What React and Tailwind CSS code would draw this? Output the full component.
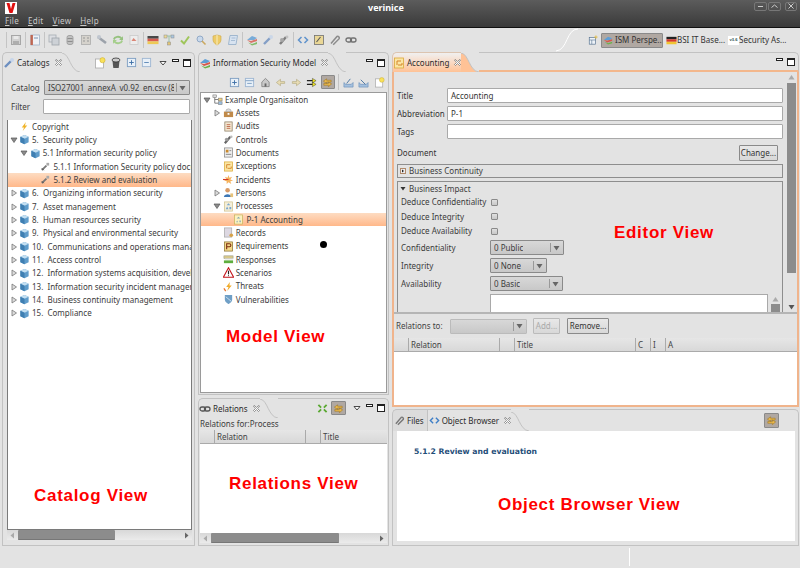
import React from "react";

const Svg = ({ s = 12, children, className = "" }) => (
  <svg width={s} height={s} viewBox="0 0 12 12" className={"shrink-0 " + className}>{children}</svg>
);

const Ic = ({ k, s = 12 }) => {
  switch (k) {
    case "cube":
      return <Svg s={s}><path d="M6 1l4.5 2v6L6 11.2 1.5 9V3z" fill="#5f9ccb" /><path d="M6 1l4.5 2L6 5.2 1.5 3z" fill="#c3dff2" /><path d="M6 5.2v6L1.5 9V3z" fill="#3f7fb2" /></Svg>;
    case "bolt":
      return <Svg s={s}><path d="M7.5 1L3 7h2.5L4 11l5-6H6.5z" fill="#f0b429" /></Svg>;
    case "wrench":
      return <Svg s={s}><path d="M2 10l5-5" stroke="#777" strokeWidth="2" /><path d="M7 2h3v3H7z" fill="#aaa" /><path d="M2 8l2 2" stroke="#444" /></Svg>;
    case "wrenchb":
      return <Svg s={s}><path d="M2 10l6-6" stroke="#6d8fc0" strokeWidth="2.4" /><circle cx="9" cy="3" r="2" fill="#c6d5ea" /></Svg>;
    case "org":
      return <Svg s={s}><path d="M3 3v7M3 6h4M3 10h4" stroke="#777" fill="none" /><rect x="1" y="1" width="4" height="3" fill="#ddd" stroke="#777" strokeWidth=".6" /><rect x="7" y="4.5" width="4" height="3" fill="#f4d27a" stroke="#777" strokeWidth=".6" /><rect x="7" y="8.5" width="4" height="3" fill="#9cc0e0" stroke="#777" strokeWidth=".6" /></Svg>;
    case "assets":
      return <Svg s={s}><rect x="1" y="5" width="10" height="6" fill="#c08a4a" /><path d="M3 5a3 3 0 016 0z" fill="#ddd" stroke="#999" strokeWidth=".6" /><rect x="5" y="6.5" width="2" height="2" fill="#fff" /></Svg>;
    case "audit":
      return <Svg s={s}><rect x="2" y="1" width="8" height="10" fill="#f3e6d0" stroke="#8a7a60" strokeWidth=".8" /><path d="M4 4h4M4 6h4M4 8h4" stroke="#b04a2a" strokeWidth=".8" /></Svg>;
    case "controls":
      return <Svg s={s}><path d="M2 10l6-7" stroke="#666" strokeWidth="2.4" /><circle cx="4" cy="6" r="2" fill="#999" /><circle cx="9" cy="3" r="1.4" fill="#bbb" /></Svg>;
    case "docs":
      return <Svg s={s}><rect x="1.5" y="1" width="9" height="10" fill="#eee" stroke="#888" strokeWidth=".8" /><rect x="3" y="3" width="3" height="3" fill="#c98a2e" /><path d="M7 4h2M3 8h6" stroke="#666" strokeWidth=".8" /></Svg>;
    case "exc":
      return <Svg s={s}><rect x="1.5" y="1" width="9" height="10" fill="#fbe6a4" stroke="#d9a93a" strokeWidth=".8" /><path d="M4 8V4h4M5 8h4V6" stroke="#d5842a" fill="none" /></Svg>;
    case "incident":
      return <Svg s={s}><path d="M6 1l1 3 3-1-2 3 3 1-3 1 1 3-3-2-2 2 0-3-3-1 3-1-2-3 3 1z" fill="#f5b35e" /><path d="M0 6h6" stroke="#d53a22" strokeWidth="1.2" /></Svg>;
    case "person":
      return <Svg s={s}><circle cx="5" cy="3.5" r="2.5" fill="#d89a66" /><path d="M1 11c0-4 8-4 8 0z" fill="#3f78b5" /><rect x="8" y="7" width="3" height="4" fill="#e7c27a" /></Svg>;
    case "process":
      return <Svg s={s}><rect x="1.5" y="1" width="9" height="10" fill="#f5efd9" stroke="#cfc28e" strokeWidth=".8" /><path d="M6 2.5l2 2H4zM3 9l1.5-3L6 9zM7 9V6.5h2V9z" fill="#79a6cf" /></Svg>;
    case "record":
      return <Svg s={s}><rect x="1.5" y="1" width="8" height="10" fill="#ddd8e2" stroke="#aaa" strokeWidth=".8" /><circle cx="9" cy="9" r="2" fill="#d8a34a" /></Svg>;
    case "req":
      return <Svg s={s}><rect x="1.5" y="1" width="9" height="10" fill="#f3d98a" stroke="#8a7233" strokeWidth=".8" /><path d="M4 9V3h3a1.5 1.5 0 010 3.2H4" stroke="#7c2a10" fill="none" strokeWidth="1.2" /></Svg>;
    case "resp":
      return <Svg s={s}><rect x="1" y="2" width="10" height="3" fill="#d8c98a" stroke="#998" strokeWidth=".6" /><rect x="2" y="5" width="9" height="2" fill="#eee" /><rect x="1" y="7" width="10" height="3" fill="#5eae3e" /></Svg>;
    case "warn":
      return <Svg s={s}><path d="M6 .8l5.6 10.4H.4z" fill="#fff" stroke="#c4161c" strokeWidth="1.2" /><path d="M6 4v4" stroke="#222" strokeWidth="1.2" /><path d="M6 9v1" stroke="#222" /></Svg>;
    case "threat":
      return <Svg s={s}><path d="M7.5 1L3.5 6.5h2.5L4.5 11l5-6H7z" fill="#f1ac2c" /><path d="M1 8l2 3" stroke="#e8752a" strokeWidth="1.4" /></Svg>;
    case "vuln":
      return <Svg s={s}><path d="M2 1h8v5c0 3-4 5-4 5S2 9 2 6z" fill="#6f9fc6" /><path d="M3 3l6 5" stroke="#cfe0ee" /></Svg>;
    case "newdoc":
      return <Svg s={s}><rect x="1.5" y="2" width="8" height="9" fill="#fff" stroke="#aaa" strokeWidth=".8" /><circle cx="8.5" cy="3.2" r="2.6" fill="#f8e15a" stroke="#c9a92a" strokeWidth=".5" /></Svg>;
    case "can":
      return <Svg s={s}><path d="M2.5 4h7l-.8 7H3.3z" fill="#555" /><ellipse cx="6" cy="3" rx="4" ry="2" fill="#ccc" stroke="#333" strokeWidth=".8" /></Svg>;
    case "plus":
      return <Svg s={s}><rect x="1.5" y="1.5" width="9" height="9" fill="#e8f0f8" stroke="#7e9fc2" /><path d="M3.5 6h5M6 3.5v5" stroke="#3d6ea5" /></Svg>;
    case "minus":
      return <Svg s={s}><rect x="1.5" y="1.5" width="9" height="9" fill="#e8f0f8" stroke="#9fb7d2" /><path d="M3.5 6h5" stroke="#5a86b5" /></Svg>;
    case "minusb":
      return <Svg s={s}><rect x="1.5" y="1.5" width="9" height="9" fill="#e8f0f8" stroke="#9fb7d2" /><path d="M1.5 4h9M3.5 7h5" stroke="#7e9fc2" /></Svg>;
    case "home":
      return <Svg s={s}><path d="M6 1.5L2 5.5v5h8v-5z" fill="#c9c9c9" stroke="#777" strokeWidth=".8" /><rect x="5" y="7" width="2" height="3.5" fill="#666" /></Svg>;
    case "left":
      return <Svg s={s}><path d="M1.5 6L6 2.5V5h4.5v2H6v2.5z" fill="#e8dcb4" stroke="#b3a980" strokeWidth=".7" /></Svg>;
    case "right":
      return <Svg s={s}><path d="M10.5 6L6 2.5V5H1.5v2H6v2.5z" fill="#e8dcb4" stroke="#b3a980" strokeWidth=".7" /></Svg>;
    case "arrows":
      return <Svg s={s}><path d="M1 4h7M1 8h7" stroke="#222" strokeWidth="1.2" /><path d="M7 1.5L11 4 7 6.5zM7 5.5L11 8 7 10.5z" fill="#eee31e" stroke="#333" strokeWidth=".5" /></Svg>;
    case "sync":
      return <Svg s={s}><path d="M1.5 4.5L5 2v1.5h5v2H5V7zM10.5 7.5L7 5.5V7H2v2h5v1.5z" fill="#e9b84a" stroke="#9c7420" strokeWidth=".6" /></Svg>;
    case "exp":
      return <Svg s={s}><path d="M1 6v5h10V6l-2 2H3z" fill="#a4c0de" stroke="#6a8fb8" strokeWidth=".7" /><path d="M4 7l4-5" stroke="#46729f" /></Svg>;
    case "imp":
      return <Svg s={s}><path d="M1 6v5h10V6l-2 2H3z" fill="#a4c0de" stroke="#6a8fb8" strokeWidth=".7" /><path d="M8 8L3 3" stroke="#46729f" /></Svg>;
    case "model":
      return <Svg s={s}><path d="M1 6l5-4 5 2-3 2z" fill="#5e9ed6" /><path d="M1 6l4 1 6-2v2L5 9z" fill="#d8584a" /><path d="M2 8.5l4 1.5 5-2v2l-5 1.5z" fill="#6cb24a" /></Svg>;
    case "save":
      return <Svg s={s}><rect x="1.5" y="1.5" width="9" height="9" fill="#c6c6c6" stroke="#808080" /><rect x="3.5" y="2" width="5" height="3" fill="#eee" /><rect x="3" y="7" width="6" height="3.5" fill="#8c8c8c" /></Svg>;
    case "reddoc":
      return <Svg s={s}><rect x="2" y="1" width="8.5" height="10" fill="#f2f5fa" stroke="#8fa6c1" strokeWidth=".8" /><rect x="1.5" y="1" width="2.4" height="10" fill="#b5482e" /><path d="M5 4h4" stroke="#5e7ea6" /></Svg>;
    case "copy":
      return <Svg s={s}><rect x="1" y="1" width="7" height="7" fill="#d8dce2" stroke="#808a96" strokeWidth=".8" /><rect x="4" y="4" width="7" height="7" fill="#c0c6cf" stroke="#707a86" strokeWidth=".8" /></Svg>;
    case "db":
      return <Svg s={s}><rect x="3" y="1.5" width="6" height="9" rx="2" fill="#aaa" stroke="#666" strokeWidth=".8" /><path d="M3.5 4.5h5M3.5 7.5h5" stroke="#555" /></Svg>;
    case "bld":
      return <Svg s={s}><rect x="1.5" y="1.5" width="9" height="9" fill="#ccc8be" stroke="#888" strokeWidth=".8" /><path d="M3 4h2M7 4h2M3 7h2M7 7h2" stroke="#666" /></Svg>;
    case "link":
      return <Svg s={s}><path d="M2 3l8 6" stroke="#6d7785" strokeWidth="2.6" /><circle cx="3" cy="3" r="2" fill="#a9b4c2" /></Svg>;
    case "refresh":
      return <Svg s={s}><path d="M1 5a5 4 0 019-1.5L11 2v4H7l1.5-1.2A3.5 3 0 002.5 6z" fill="#63ad3e" /><path d="M11 7a5 4 0 01-9 1.5L1 10V6h4L3.5 7.2A3.5 3 0 009.5 6z" fill="#7cc152" /></Svg>;
    case "pdf":
      return <Svg s={s}><rect x="2" y="1.5" width="8" height="9" fill="#f4f4f4" stroke="#bbb" strokeWidth=".8" /><path d="M3.5 7l2-3 3 3z" fill="#d6492e" /></Svg>;
    case "de":
      return <Svg s={s}><rect x="0.5" y="2" width="11" height="2.7" fill="#222" /><rect x="0.5" y="4.7" width="11" height="2.7" fill="#d8392b" /><rect x="0.5" y="7.4" width="11" height="2.7" fill="#f1c532" /></Svg>;
    case "tree":
      return <Svg s={s}><path d="M2 2h8M6 2v8" stroke="#8b9" fill="none" /><rect x="1" y="1" width="3" height="3" fill="#f0d880" stroke="#777" strokeWidth=".5" /><rect x="8" y="1" width="3" height="3" fill="#9cc0e0" stroke="#777" strokeWidth=".5" /><rect x="4.5" y="8" width="3" height="3" fill="#e3bf5a" stroke="#777" strokeWidth=".5" /></Svg>;
    case "check":
      return <Svg s={s}><path d="M2 6.5l3 3 5-7" stroke="#8fbf3a" strokeWidth="2" fill="none" /></Svg>;
    case "search":
      return <Svg s={s}><circle cx="5" cy="5" r="3" fill="#c3d7ef" stroke="#7f9cc0" /><path d="M7 7l3.5 3.5" stroke="#c69a3e" strokeWidth="1.6" /></Svg>;
    case "shield":
      return <Svg s={s}><path d="M2 2l4-1 4 1v4c0 3-4 5-4 5S2 9 2 6z" fill="#f0c64a" stroke="#c99a22" strokeWidth=".6" /><path d="M6 1v10" stroke="#fff1b8" /></Svg>;
    case "scroll":
      return <Svg s={s}><path d="M3 1.5h7.5L9 10.5H1.5z" fill="#d6e4f4" stroke="#7e9fc2" strokeWidth=".8" /><path d="M4.5 4h4M4 6.5h4" stroke="#7e9fc2" strokeWidth=".7" /></Svg>;
    case "code":
      return <Svg s={s}><path d="M4.5 3L1.5 6l3 3M7.5 3l3 3-3 3" stroke="#3f7fc7" strokeWidth="1.5" fill="none" /></Svg>;
    case "note":
      return <Svg s={s}><rect x="1.5" y="1.5" width="9" height="9" fill="#ecd583" stroke="#555" strokeWidth=".8" /><path d="M3.5 8l4-5" stroke="#333" strokeWidth="1.1" /></Svg>;
    case "clip":
      return <Svg s={s}><path d="M2 9.5l6-7a1.7 1.7 0 012.2 2.2l-6 6" stroke="#777" strokeWidth="1.5" fill="none" /></Svg>;
    case "chain":
      return <Svg s={s}><rect x="1" y="4" width="5.5" height="4" rx="2" fill="none" stroke="#555" strokeWidth="1.3" /><rect x="5.5" y="4" width="5.5" height="4" rx="2" fill="none" stroke="#555" strokeWidth="1.3" /></Svg>;
    case "newp":
      return <Svg s={s}><rect x="1.5" y="3" width="7.5" height="8" fill="#eef3f8" stroke="#55718f" strokeWidth=".8" /><path d="M1.5 6h7.5M4.5 6v5" stroke="#55718f" strokeWidth=".7" /><path d="M9.5 0.5v4M7.5 2.5h4" stroke="#e2b93b" /></Svg>;
    case "collapse":
      return <Svg s={s}><path d="M1.5 2l3 3M10.5 2l-3 3M1.5 10l3-3M10.5 10l-3-3" stroke="#5aa832" strokeWidth="2" /></Svg>;
    case "acc":
      return <Svg s={s}><rect x="1.5" y="1" width="9" height="10" fill="#fbf1c0" stroke="#c9b25a" strokeWidth=".8" /><path d="M6 3l2 2H4zM3.5 9l1-2 1 2zM7 9V7h1.5v2z" fill="#8aa9b0" /></Svg>;
    default:
      return <Svg s={s} />;
  }
};

const Caret = ({ open }) => (
  <svg width="8" height="8" viewBox="0 0 8 8" className="shrink-0">
    {open ? <path d="M1 2h6L4 6.5z" fill="#8c8c8c" stroke="#555" strokeWidth=".7" /> : <path d="M2 1l4.5 3L2 7z" fill="#ddd" stroke="#777" strokeWidth=".8" />}
  </svg>
);

const Close = () => (
  <svg width="7" height="7" viewBox="0 0 7 7" className="shrink-0 ml-[5px]">
    <path d="M.5 1l1-.5L3.500 2.500 5.500.5l1 .5L4.500 3.500l2 2-1 1-2-2-2 2-1-1 2-2z" fill="#fff" stroke="#555" strokeWidth=".6" />
  </svg>
);

const ViewBtns = ({ menu }) => (
  <div className="flex items-center gap-[3px] shrink-0">
    {menu && (
      <svg width="8" height="8" viewBox="0 0 8 8" className="mr-[2px]"><path d="M1 2.500h6L4 6z" fill="#fff" stroke="#222" strokeWidth=".8" /></svg>
    )}
    <div className="w-[8px] h-[8px] flex items-start"><div className="w-[7px] h-[3px] bg-white border border-[#222]" /></div>
    <div className="w-[8px] h-[8px] bg-white border border-[#222] border-t-2" />
  </div>
);

const Curve = ({ fill = "#e3e3e3" }) => (
  <svg width="18" height="19" viewBox="0 0 18 19" className="shrink-0 self-end" preserveAspectRatio="none">
    <path d="M0 0C8 1 8 18 18 19H0z" fill={fill} />
    <path d="M0 0C8 1 8 18 18 19" fill="none" stroke="#c2c2c2" />
  </svg>
);

const Tab = ({ icon, label, grad }) => (
  <div className="flex items-stretch h-[20px] shrink-0">
    <div className={"flex items-center rounded-tl-[5px] " + (grad ? "bg-gradient-to-b from-[#f0f0f0] to-[#ffc296] border-t border-l border-[#dcc4b0]" : "border-t border-l border-[#c2c2c2]")}>
      <Ic k={icon} s={12} />
      <span className="ml-[2px] text-[#2c2c2c] whitespace-nowrap">{label}</span>
      <Close />
    </div>
    <Curve fill={grad ? "#ffc296" : "#e3e3e3"} />
  </div>
);

const TreeRow = ({ depth, caret, icon, label, sel }) => (
  <div className={"flex items-center h-[13.33px] shrink-0 whitespace-pre " + (sel ? "bg-gradient-to-b from-[#fddcc2] to-[#ffb88a] " : "")}>
    <div style={{ width: depth * 10.7 }} className="shrink-0" />
    <div className="w-[11px] flex justify-center shrink-0">{caret && <Caret open={caret === "open"} />}</div>
    <Ic k={icon} s={11} />
    <span className="ml-[2px]">{label}</span>
  </div>
);

const catalog = [
  [0, null, "bolt", "Copyright"],
  [0, "open", "cube", "5.  Security policy"],
  [1, "open", "cube", "5.1 Information security policy"],
  [2, null, "wrench", "5.1.1 Information Security policy document"],
  [2, null, "wrench", "5.1.2 Review and evaluation", true],
  [0, "closed", "cube", "6.  Organizing information security"],
  [0, "closed", "cube", "7.  Asset management"],
  [0, "closed", "cube", "8.  Human resources security"],
  [0, "closed", "cube", "9.  Physical and environmental security"],
  [0, "closed", "cube", "10.  Communications and operations management"],
  [0, "closed", "cube", "11.  Access control"],
  [0, "closed", "cube", "12.  Information systems acquisition, development"],
  [0, "closed", "cube", "13.  Information security incident management"],
  [0, "closed", "cube", "14.  Business continuity management"],
  [0, "closed", "cube", "15.  Compliance"],
];

const model = [
  [0, "open", "org", "Example Organisaiton"],
  [1, "closed", "assets", "Assets"],
  [1, null, "audit", "Audits"],
  [1, null, "controls", "Controls"],
  [1, null, "docs", "Documents"],
  [1, null, "exc", "Exceptions"],
  [1, null, "incident", "Incidents"],
  [1, "closed", "person", "Persons"],
  [1, "open", "process", "Processes"],
  [2, null, "acc", "P-1 Accounting", true],
  [1, null, "record", "Records"],
  [1, null, "req", "Requirements"],
  [1, null, "resp", "Responses"],
  [1, null, "warn", "Scenarios"],
  [1, null, "threat", "Threats"],
  [1, null, "vuln", "Vulnerabilities"],
];

const HeadCell = ({ w, label, grow }) => (
  <div style={grow ? undefined : { width: w }} className={"h-full flex items-center pl-[2px] border-r border-[#aaa] text-[#444] shrink-0 " + (grow ? "flex-1 border-r-0" : "")}>{label}</div>
);

const TableHead = ({ children }) => (
  <div className="flex h-[14px] shrink-0 bg-gradient-to-b from-[#e6e6e6] to-[#d8d8d8] border-b border-[#aaa] overflow-hidden">{children}</div>
);

const HScroll = ({ thumb }) => (
  <div className="flex items-center h-[10px] shrink-0 bg-gradient-to-b from-[#d8d8d8] to-[#ebebeb]">
    <div className="w-[11px] flex justify-center"><svg width="5" height="7"><path d="M4 .5L.5 3.500 4 6.500z" fill="#aaa" /></svg></div>
    <div style={{ width: thumb }} className="h-full bg-[#8c8c8c] border-b border-[#777] rounded-[1px]" />
    <div className="flex-1" />
    <div className="w-[11px] flex justify-center"><svg width="5" height="7"><path d="M1 .5L4.500 3.500 1 6.500z" fill="#666" /></svg></div>
  </div>
);

const Combo = ({ w, label, disabled }) => (
  <div style={{ width: w }} className={"h-[15px] flex items-center justify-between pl-[3px] pr-[3px] border border-[#8a8a8a] rounded-[1px] bg-gradient-to-b from-[#d8d8d8] to-[#c8c8c8] overflow-hidden " + (disabled ? "border-[#bbb] " : "")}>
    <span className="whitespace-nowrap overflow-hidden">{label}</span>
    <div className="flex items-center shrink-0 pl-[2px]">
      <div className="w-px h-[9px] bg-[#999] mr-[2px]" />
      <svg width="7" height="6"><path d="M.5 1h6L3.500 5.500z" fill="#666" /></svg>
    </div>
  </div>
);

const TextInput = ({ value, className = "" }) => (
  <div className={"h-[15px] bg-white border border-[#a9a9a9] rounded-[1px] flex items-center px-[3px] text-[#333] " + className}>{value}</div>
);

const Btn = ({ children, disabled, className = "" }) => (
  <div className={"h-[16px] flex items-center justify-center rounded-[1px] border bg-gradient-to-b from-[#e8e8e8] to-[#d8d8d8] whitespace-nowrap " + (disabled ? "border-[#bbb] text-[#aaa] " : "border-[#8a8a8a] text-[#333] ") + className}>{children}</div>
);

const Check = () => <div className="w-[7px] h-[7px] border border-[#8a8a8a] bg-gradient-to-b from-[#e0e0e0] to-[#c8c8c8] rounded-[1px]" />;

const Sep = () => <div className="w-px h-[16px] bg-[#c4c4c4] mx-[1px] shrink-0" />;

const Overlay = ({ className, children }) => (
  <div className={"absolute text-[#ff0000] font-bold text-[17px] leading-none whitespace-nowrap font-['Liberation_Sans',sans-serif] tracking-[0.7px] " + className}>{children}</div>
);

const toolbarGroups = [
  ["save"],
  ["reddoc"],
  ["copy", "db", "bld", "link", "refresh", "pdf"],
  ["de", "tree", "check", "search", "shield", "scroll"],
  ["model", "wrenchb", "controls"],
  ["code", "note", "clip", "chain"],
];

export default function App() {
  return (
    <div className="relative w-[800px] h-[568px] overflow-hidden flex flex-col bg-[#e3e3e3] text-[8px] leading-none text-[#3c3c3c] font-['Noto_Sans',sans-serif]">
      {/* title + menu */}
      <div className="h-[28px] shrink-0 flex flex-col bg-gradient-to-b from-[#5c5c5c] to-[#3a3a3a] border-b border-[#111]">
        <div className="h-[14px] flex items-center justify-between relative">
          <svg width="12" height="12" viewBox="0 0 12 12" className="ml-[5px] mt-[2px]">
            <rect width="12" height="12" fill="#fff" />
            <path d="M1.500 1h3l1.500 6 1.500-6h3L7.500 11h-3z" fill="#e01010" />
          </svg>
          <span className="absolute left-[368px] top-[3px] text-white font-bold text-[9px]">verinice</span>
          <div className="flex gap-[1px] mr-[3px] -mt-[2px]">
            <div className="w-[13px] h-[9px] border border-[#777] rounded-[2px] flex items-center justify-center"><div className="w-[5px] h-px bg-[#ccc]" /></div>
            <div className="w-[13px] h-[9px] border border-[#777] rounded-[2px] flex items-center justify-center"><svg width="7" height="4"><path d="M.5 3.500L3.500 1l3 2.500" stroke="#ccc" fill="none" /></svg></div>
            <div className="w-[12px] h-[9px] border border-[#777] rounded-[2px] ml-[3px] flex items-center justify-center"><svg width="6" height="6"><path d="M.5 .5l5 5M5.500 .5l-5 5" stroke="#ccc" /></svg></div>
          </div>
        </div>
        <div className="h-[13px] flex items-center gap-[9px] pl-[5px] text-[#c8c8c8] tracking-[0.3px]">
          <span><u>F</u>ile</span>
          <span><u>E</u>dit</span>
          <span><u>V</u>iew</span>
          <span><u>H</u>elp</span>
        </div>
      </div>

      {/* toolbar */}
      <div className="h-[24px] shrink-0 flex items-center pl-[5px] relative">
        <Sep />
        {toolbarGroups.map((g, i) => (
          <React.Fragment key={i}>
            <div className="flex">
              {g.map((k, j) => (
                <div key={j} className={"w-[16px] flex justify-center " + (i === 0 || i === 2 ? "opacity-60" : "opacity-80")}><Ic k={k} s={12} /></div>
              ))}
            </div>
            {i < toolbarGroups.length - 1 && <Sep />}
          </React.Fragment>
        ))}
        <div className="flex-1" />
        <svg width="22" height="24" viewBox="0 0 22 24" className="shrink-0">
          <path d="M0 23C12 22 10 1 22 1" stroke="#fff" fill="none" />
        </svg>
        <div className="w-[10px]" />
        <Ic k="newp" s={10} />
        <div className="ml-[3px] h-[15px] w-[62px] flex items-center pl-[1px] gap-[2px] bg-[#b0a8a2] border border-[#8a8a8a] rounded-[1px] whitespace-nowrap overflow-hidden text-[#333]">
          <Ic k="model" s={10} />ISM Perspe...
        </div>
        <div className="ml-[3px] flex items-center whitespace-nowrap text-[#333] w-[62px]"><Ic k="de" s={11} />BSI IT Base...</div>
        <div className="w-[72px] flex items-center whitespace-nowrap text-[#333]">
          <div className="w-[11px] h-[9px] bg-white text-[4px] flex items-center justify-center font-bold text-[#355]">v3.6</div>Security As...
        </div>
      </div>

      {/* main */}
      <div className="flex-1 min-h-0 flex pl-[2px] pr-[1px] gap-[3px]">
        {/* Catalogs */}
        <div className="w-[193px] shrink-0 flex flex-col">
          <div className="flex items-stretch h-[20px] shrink-0">
            <Tab icon="wrenchb" label="Catalogs" />
            <div className="flex-1 border-t border-[#c2c2c2] flex items-center justify-end pr-[3px] rounded-tr-[5px] border-r">
              <div className="flex gap-[4px] mr-[4px]"><Ic k="newdoc" /><Ic k="can" /></div>
              <div className="flex gap-[4px] mr-[7px]"><Ic k="plus" s={11} /><Ic k="minus" s={11} /></div>
              <ViewBtns menu />
            </div>
          </div>
          <div className="flex-1 min-h-0 flex flex-col border-x border-b border-[#c2c2c2] pl-[4px] pr-[2px] pb-[5px]">
            <div className="flex items-center h-[15px] mt-[8px] shrink-0">
              <span className="w-[37px] pl-[4px] shrink-0">Catalog</span>
              <Combo w={146} label="ISO27001_annexA_v0.92_en.csv (8" />
            </div>
            <div className="flex items-center h-[15px] mt-[4px] shrink-0">
              <span className="w-[36px] pl-[4px] shrink-0">Filter</span>
              <TextInput className="w-[147px]" />
            </div>
            <div className="mt-[6px] flex-1 min-h-0 bg-white border border-t-0 border-[#7a7a7a] overflow-hidden flex flex-col">
              {catalog.map((r, i) => (
                <TreeRow key={i} depth={r[0]} caret={r[1]} icon={r[2]} label={r[3]} sel={r[4]} />
              ))}
            </div>
            <HScroll thumb={97} />
          </div>
        </div>

        {/* Model + relations */}
        <div className="w-[191px] shrink-0 flex flex-col gap-[3px]">
          <div className="h-[343px] shrink-0 flex flex-col">
            <div className="flex items-stretch h-[20px] shrink-0">
              <Tab icon="model" label="Information Security Model" />
              <div className="flex-1 border-t border-r border-[#c2c2c2] rounded-tr-[5px] flex items-center justify-end pr-[3px]"><ViewBtns /></div>
            </div>
            <div className="flex-1 min-h-0 flex flex-col border-x border-b border-[#c2c2c2] px-[1px] pb-[1px]">
              <div className="h-[20px] shrink-0 flex items-center justify-end pr-[1px] gap-[2px]">
                {["plus", "minusb", "home", "left", "right", "arrows"].map((k) => (
                  <div key={k} className="w-[13.500px] flex justify-center"><Ic k={k} s={11} /></div>
                ))}
                <div className="w-[14px] h-[14px] flex items-center justify-center bg-[#b0a8a2] border border-[#8a8a8a] rounded-[1px]"><Ic k="sync" s={11} /></div>
                <Sep />
                {["exp", "imp", "newdoc"].map((k) => (
                  <div key={k} className="w-[13.500px] flex justify-center"><Ic k={k} s={11} /></div>
                ))}
              </div>
              <div className="flex-1 min-h-0 bg-white border border-[#9a9a9a] flex flex-col overflow-hidden">
                {model.map((r, i) => (
                  <TreeRow key={i} depth={r[0]} caret={r[1]} icon={r[2]} label={r[3]} sel={r[4]} />
                ))}
              </div>
            </div>
          </div>

          <div className="flex-1 min-h-0 flex flex-col">
            <div className="flex items-stretch h-[19px] shrink-0">
              <Tab icon="chain" label="Relations" />
              <div className="flex-1 border-t border-r border-[#c2c2c2] rounded-tr-[5px] flex items-center justify-end pr-[3px]">
                <div className="flex items-center gap-[3px] mr-[7px]">
                  <Ic k="collapse" s={11} />
                  <div className="w-[15px] h-[14px] flex items-center justify-center bg-[#b0a8a2] border border-[#8a8a8a] rounded-[1px]"><Ic k="sync" s={11} /></div>
                </div>
                <ViewBtns menu />
              </div>
            </div>
            <div className="flex-1 min-h-0 flex flex-col border-x border-b border-[#c2c2c2] px-[1px] pb-[2px]">
              <div className="h-[13px] flex items-center pt-[1px] shrink-0">Relations for:Process</div>
              <TableHead>
                <HeadCell w={15} />
                <HeadCell w={91} label="Relation" />
                <HeadCell w={15} />
                <HeadCell grow label="Title" />
              </TableHead>
              <div className="flex-1 min-h-0 bg-white" />
              <HScroll thumb={128} />
            </div>
          </div>
        </div>

        {/* Editor + browser */}
        <div className="flex-1 min-w-0 flex flex-col gap-[2px]">
          <div className="h-[355px] shrink-0 flex flex-col">
            <div className="flex items-stretch h-[20px] shrink-0">
              <Tab icon="exc" label="Accounting" grad />
              <div className="flex-1 border-t border-r border-[#c2c2c2] rounded-tr-[5px] border-b-2 border-b-[#f3b78c] flex items-start pt-[5px] justify-end pr-[3px]"><ViewBtns /></div>
            </div>
            <div className="flex-1 min-h-0 flex flex-col border-x-2 border-b-2 border-[#f0b48c]">
              {/* form */}
              <div className="h-[240px] shrink-0 flex overflow-hidden">
                <div className="flex-1 min-w-0 pl-[3px] pr-[3px] flex flex-col overflow-hidden">
                  {[["Title", "Accounting", "mt-[16px]"], ["Abbreviation", "P-1", "mt-[3px]"], ["Tags", "", "mt-[3px]"]].map(([l, v, m]) => (
                    <div key={l} className={"flex items-center shrink-0 " + m}>
                      <span className="w-[50px] shrink-0 text-[#333]">{l}</span>
                      <TextInput value={v} className="flex-1" />
                    </div>
                  ))}
                  <div className="flex items-center h-[17px] mt-[5px] shrink-0">
                    <span className="flex-1 text-[#333]">Document</span>
                    <Btn className="w-[39px] mr-[5px]">Change...</Btn>
                  </div>
                  <div className="h-[14px] mt-[3px] shrink-0 border border-[#8e8e8e] flex items-center pl-[2px] gap-[3px]">
                    <svg width="6" height="6"><rect x=".5" y=".5" width="5" height="5" fill="#eee" stroke="#b08a6c" /><path d="M2 1.500l2 1.500-2 1.500z" fill="#222" /></svg>
                    Business Continuity
                  </div>
                  <div className="flex-1 min-h-0 mt-[3px] border-x border-t border-[#8e8e8e] flex flex-col pl-[3px] overflow-hidden">
                    <div className="h-[13px] flex items-center gap-[3px] shrink-0 -ml-[1px]">
                      <svg width="6" height="5"><path d="M.5 1h5L3 4.500z" fill="#333" /></svg>Business Impact
                    </div>
                    {["Deduce Confidentiality", "Deduce Integrity", "Deduce Availability"].map((l) => (
                      <div key={l} className="flex items-center h-[14.500px] shrink-0">
                        <span className="w-[90px] shrink-0 whitespace-nowrap">{l}</span>
                        <Check />
                      </div>
                    ))}
                    {[["Confidentiality", "0 Public", 74], ["Integrity", "0 None", 57], ["Availability", "0 Basic", 73]].map(([l, v, w]) => (
                      <div key={l} className="flex items-center h-[18px] shrink-0">
                        <span className="w-[89px] shrink-0">{l}</span>
                        <Combo w={w} label={v} />
                      </div>
                    ))}
                    <div className="flex flex-1 min-h-0 mt-[1px] ml-[89px]">
                      <div className="flex-1 bg-white border border-[#a9a9a9] border-b-0" />
                      <div className="w-[10px] flex flex-col items-center shrink-0 mx-[2px]">
                        <svg width="7" height="6" className="mt-[2px]"><path d="M3.500 1L.5 5.500h6z" fill="#aaa" /></svg>
                        <div className="w-[9px] flex-1 bg-[#8c8c8c] mt-[2px]" />
                      </div>
                    </div>
                  </div>
                </div>
                <div className="w-[11px] shrink-0 flex flex-col items-center pr-[1px] pt-[2px]">
                  <svg width="7" height="6"><path d="M3.500 1L.5 5.500h6z" fill="#aaa" /></svg>
                  <div className="w-[9px] h-[190px] bg-[#8c8c8c] mt-[3px]" />
                  <div className="flex-1" />
                  <svg width="7" height="6" className="mb-[2px]"><path d="M.5 1h6L3.500 5.500z" fill="#555" /></svg>
                </div>
              </div>
              {/* relations sub-panel */}
              <div className="flex-1 min-h-0 flex flex-col border-t-2 border-[#b5b5b5]">
                <div className="h-[24px] shrink-0 flex items-center pl-[2px]">
                  <span className="w-[54px] shrink-0 text-[#444] whitespace-nowrap">Relations to:</span>
                  <Combo w={77} disabled />
                  <Btn disabled className="w-[27px] ml-[6px]">Add...</Btn>
                  <Btn className="w-[42px] ml-[7px]">Remove...</Btn>
                </div>
                <TableHead>
                  <HeadCell w={15} />
                  <HeadCell w={91} label="Relation" />
                  <HeadCell w={15} />
                  <HeadCell w={121} label="Title" />
                  <HeadCell w={15} label="C" />
                  <HeadCell w={15} label="I" />
                  <HeadCell grow label="A" />
                </TableHead>
                <div className="flex-1 min-h-0 bg-white" />
              </div>
            </div>
          </div>

          <div className="flex-1 min-h-0 flex flex-col">
            <div className="flex items-stretch h-[22px] shrink-0">
              <div className="flex items-center pl-[1px] pr-[3px] h-full border-t border-l border-[#c2c2c2] rounded-tl-[5px] bg-[#dcdcdc]">
                <Ic k="clip" s={11} /><span className="ml-[2px] text-[#2c2c2c]">Files</span>
              </div>
              <div className="flex items-stretch h-[22px] border-l border-[#c2c2c2]">
                <div className="flex items-center pl-[1px] border-t border-[#c2c2c2]">
                  <Ic k="code" s={11} /><span className="ml-[2px] text-[#2c2c2c]">Object Browser</span><Close />
                </div>
                <Curve />
              </div>
              <div className="flex-1 border-t border-r border-[#c2c2c2] rounded-tr-[5px] flex items-center justify-end pr-[19px]">
                <div className="w-[15px] h-[15px] flex items-center justify-center bg-[#b0a8a2] border border-[#8a8a8a] rounded-[1px]"><Ic k="sync" s={11} /></div>
              </div>
            </div>
            <div className="flex-1 min-h-0 border-x border-b border-[#c2c2c2] pl-[4px] pr-[3px] pb-[4px]">
              <div className="h-full bg-white pl-[17px] pt-[17px] text-[#1f4e79] font-bold text-[7.7px] font-['DejaVu_Sans',sans-serif]">5.1.2 Review and evaluation</div>
            </div>
          </div>
        </div>
      </div>

      {/* status */}
      <div className="h-[22px] shrink-0 flex items-center pl-[629px]">
        <div className="w-px h-[18px] bg-[#b5b5b5] border-r border-white" />
      </div>

      <Overlay className="left-[34px] top-[487px]">Catalog View</Overlay>
      <Overlay className="left-[226px] top-[328px]">Model View</Overlay>
      <Overlay className="left-[229px] top-[475px]">Relations View</Overlay>
      <Overlay className="left-[614px] top-[224px]">Editor View</Overlay>
      <Overlay className="left-[498px] top-[496px]">Object Browser View</Overlay>
      <div className="absolute left-[320px] top-[241px] w-[7px] h-[7px] rounded-full bg-black" />
    </div>
  );
}
